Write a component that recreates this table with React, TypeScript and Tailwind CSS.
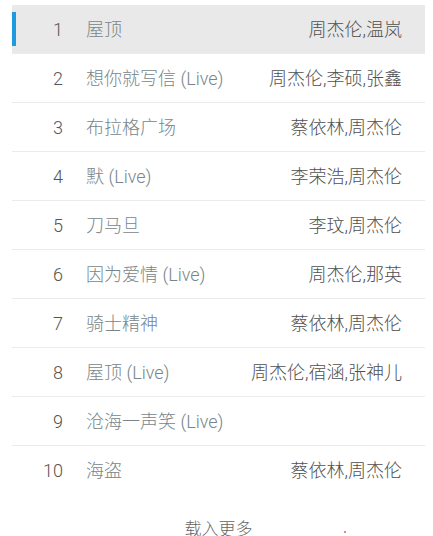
const songs = [
  { title: "屋顶", artist: "周杰伦,温岚" },
  { title: "想你就写信 (Live)", artist: "周杰伦,李硕,张鑫" },
  { title: "布拉格广场", artist: "蔡依林,周杰伦" },
  { title: "默 (Live)", artist: "李荣浩,周杰伦" },
  { title: "刀马旦", artist: "李玟,周杰伦" },
  { title: "因为爱情 (Live)", artist: "周杰伦,那英" },
  { title: "骑士精神", artist: "蔡依林,周杰伦" },
  { title: "屋顶 (Live)", artist: "周杰伦,宿涵,张神儿" },
  { title: "沧海一声笑 (Live)", artist: "" },
  { title: "海盗", artist: "蔡依林,周杰伦" },
]

export default function App() {
  return (
    <div
      className="h-[536px] w-[433px] overflow-hidden bg-white font-light"
      style={{ fontFamily: "Roboto, 'Noto Sans CJK SC', sans-serif" }}
    >
      <ul className="ml-[12px] mt-[5px] w-[413px]">
        {songs.map((song, i) => (
          <li
            key={i}
            className={`relative flex h-[49px] items-center border-b border-[#ebebeb] pr-[23px] text-[18px] ${
              i === 0 ? "bg-[#e9e9e9]" : ""
            } ${i === songs.length - 1 ? "border-b-0" : ""}`}
          >
            {i === 0 && (
              <span className="absolute left-0 top-[7px] h-[34px] w-[4px] bg-[#1e9be0]" />
            )}
            <span className="w-[51px] text-right text-[#555]">{i + 1}</span>
            <span className="ml-[23px] flex-1 text-[#77868a]">{song.title}</span>
            <span className="text-[#505050]">{song.artist}</span>
          </li>
        ))}
      </ul>

      {/* Load more */}
      <div className="relative mt-[22px] w-[437px] text-center text-[17px] text-[#666]">
        载入更多
        <span className="absolute left-[344px] top-[14px] h-[2px] w-[2px] rounded-full bg-[#e55]" />
      </div>
    </div>
  )
}
